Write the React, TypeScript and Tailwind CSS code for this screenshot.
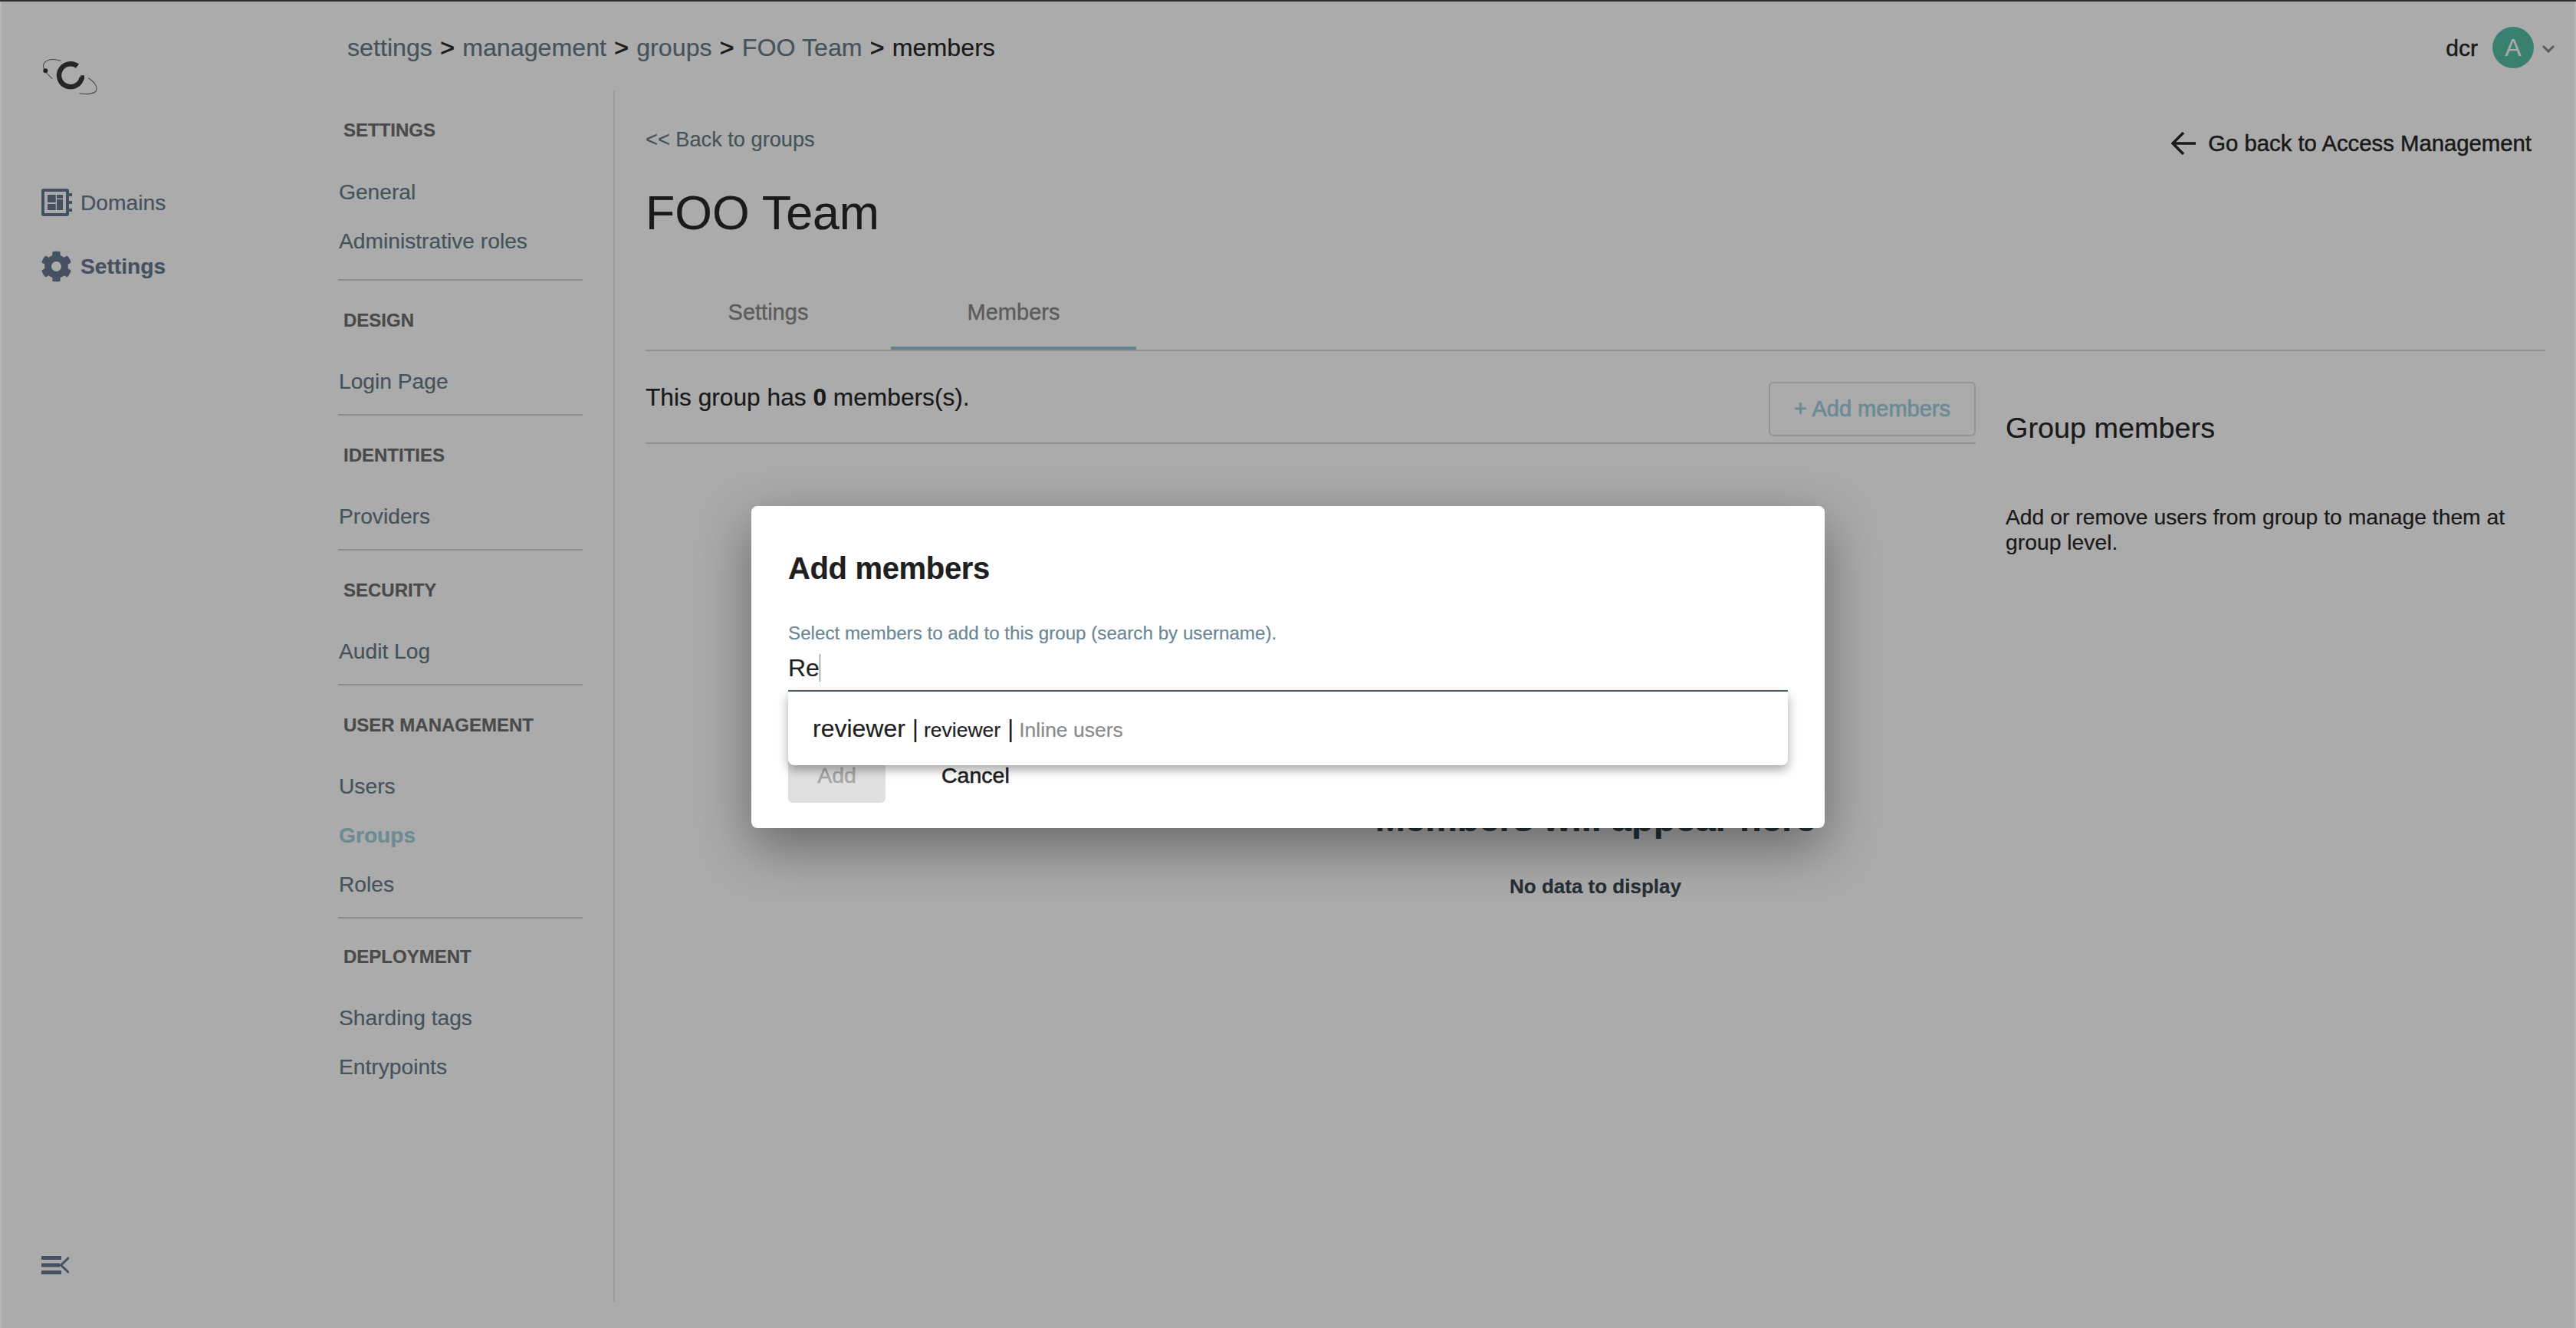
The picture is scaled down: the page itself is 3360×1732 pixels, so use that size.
import React from 'react';
import { FaCog } from 'react-icons/fa';

const NAV_SECTIONS = [
  { title: 'SETTINGS', items: ['General', 'Administrative roles'] },
  { title: 'DESIGN', items: ['Login Page'] },
  { title: 'IDENTITIES', items: ['Providers'] },
  { title: 'SECURITY', items: ['Audit Log'] },
  { title: 'USER MANAGEMENT', items: ['Users', 'Groups', 'Roles'] },
  { title: 'DEPLOYMENT', items: ['Sharding tags', 'Entrypoints'] },
];

const Logo = () => (
  <svg viewBox="50 70 80 60" className="w-[80px] h-[60px]" fill="none">
    <path d="M101 86.2A15 15 0 1 0 106.8 101" stroke="#3a3a3a" strokeWidth="6.5" />
    <path d="M105 100.8H110" stroke="#3a3a3a" strokeWidth="5" />
    <path d="M79.3 79.3C66 75 55 79 56.7 88C57.5 93 63 98 68.3 102.7" stroke="#6f6f6f" strokeWidth="1.1" />
    <path d="M115 101.7C124 107 128 114 125 119C121 123 111 123 103.3 121.7" stroke="#6f6f6f" strokeWidth="1.1" />
    <circle cx="59.3" cy="92.3" r="3" fill="#333" />
  </svg>
);

const DomainsIcon = () => (
  <svg viewBox="54 248 40 36" className="w-[40px] h-[36px]" fill="#68798f">
    <path
      fillRule="evenodd"
      d="M57 248H87A3 3 0 0 1 90 251V281A3 3 0 0 1 87 284H57A3 3 0 0 1 54 281V251A3 3 0 0 1 57 248ZM58 252V280H86V252Z"
    />
    <rect x="62" y="256" width="10.7" height="10" />
    <rect x="74" y="256" width="8" height="4.7" />
    <rect x="62" y="268" width="10.7" height="8" />
    <rect x="74" y="262" width="8" height="14" />
    <rect x="90" y="254" width="4" height="4" />
    <rect x="90" y="264" width="4" height="4" />
    <rect x="90" y="274" width="4" height="4" />
  </svg>
);

const CollapseIcon = () => (
  <svg viewBox="54 1640 36 24" className="w-[36px] h-[24px]" fill="none" stroke="#68798f">
    <path d="M54 1642.5H80M54 1652H78M54 1661.5H80" strokeWidth="5" />
    <path d="M90 1642L79.5 1652L90 1662" strokeWidth="3" />
  </svg>
);

const BackArrow = () => (
  <svg viewBox="0 0 32 32" className="w-[32px] h-[32px]" fill="none" stroke="#272727" strokeWidth="3.5">
    <path d="M32 16H3M16 2L2 16L16 30" />
  </svg>
);

const Chevron = () => (
  <svg viewBox="0 0 16 10" className="w-[16px] h-[10px]" fill="none" stroke="#898989" strokeWidth="3">
    <path d="M1 1L8 8L15 1" />
  </svg>
);

const Crumb = ({ label }: { label: string }) => <span className="text-[#687d88]">{label}</span>;

const Sep = () => <span className="mx-[1.25px] text-[#272727] [-webkit-text-stroke:0.6px]"> &gt; </span>;

export default function App() {
  return (
    <div className="relative flex h-screen overflow-hidden bg-white border-t-2 border-[#2f2f2f] font-['Liberation_Sans',Arial,sans-serif] text-[#272727] [-webkit-text-stroke:0.2px]">
      {/* main rail */}
      <aside className="flex w-[400px] shrink-0 flex-col pl-[54px] pb-[70px]">
        <div className="ml-[-4px] mt-[68px]">
          <Logo />
        </div>
        <div className="mt-[114px] flex h-[40px] items-center gap-[11px] text-[28.2px] text-[#68798f]">
          <DomainsIcon />
          Domains
        </div>
        <div className="mt-[42px] flex h-[42px] items-center gap-[11px] text-[28.2px] font-bold text-[#68798f]">
          <FaCog size={41} className="-ml-px" />
          Settings
        </div>
        <div className="mt-auto">
          <CollapseIcon />
        </div>
      </aside>

      <div className="flex min-w-0 flex-1 flex-col pb-[34px]">
        <header className="flex h-[116px] shrink-0 items-start justify-between pl-[53px] pr-[28px] pt-[41px]">
          <div className="text-[32.2px] leading-[38px]">
            <Crumb label="settings" />
            <Sep />
            <Crumb label="management" />
            <Sep />
            <Crumb label="groups" />
            <Sep />
            <Crumb label="FOO Team" />
            <Sep />
            <span>members</span>
          </div>
          <div className="-mt-[8px] flex items-center">
            <span className="text-[30px] [-webkit-text-stroke:0.5px]">dcr</span>
            <div className="ml-[19px] flex h-[54px] w-[54px] items-center justify-center rounded-full bg-[#55bfa6] text-[32px] text-white [-webkit-text-stroke:0px]">
              A
            </div>
            <div className="ml-[11px] mt-[4px]">
              <Chevron />
            </div>
          </div>
        </header>

        <div className="flex min-h-0 flex-1">
          <nav className="w-[402px] shrink-0 border-r-2 border-[#e6e6e6] pl-[41px] pr-[40px]">
            {NAV_SECTIONS.map((section, i) => (
              <div
                key={section.title}
                className={i === NAV_SECTIONS.length - 1 ? 'pt-[30px]' : i === 0 ? 'border-b-2 border-[#d1d1d1] pb-[18px] pt-[32px]' : 'border-b-2 border-[#d1d1d1] pb-[11px] pt-[32px]'}
              >
                <div className={`h-[40px] pl-[7px] text-[24px] font-bold leading-[40px] text-[#6f6f6f] ${i === 0 ? 'mb-[28px]' : 'mb-[27px]'}`}>
                  {section.title}
                </div>
                {section.items.map((item) => (
                  <div
                    key={item}
                    className={`h-[64px] pl-px text-[28.2px] leading-[64px] ${item === 'Groups' ? 'font-bold text-[#a3d0da]' : 'text-[#687d88]'}`}
                  >
                    {item}
                  </div>
                ))}
              </div>
            ))}
          </nav>

          <main className="min-w-0 flex-1 pl-[40px] pr-[40px]">
            <div className="flex items-start justify-between pt-[44px]">
              <span className="text-[27.2px] leading-[40px] text-[#687d88]">&lt;&lt; Back to groups</span>
              <span className="mr-[18px] mt-[5px] flex items-center gap-[16px] text-[29.3px] leading-[40px] [-webkit-text-stroke:0.5px]">
                <BackArrow />
                Go back to Access Management
              </span>
            </div>
            <h1 className="mt-[34px] text-[62.6px] leading-[72px]">FOO Team</h1>
            <div className="mt-[47px] flex border-b-2 border-[#d8d8d8]">
              <div className="flex h-[96px] w-[320px] items-center justify-center text-[29px] text-[#898989] [-webkit-text-stroke:0.4px]">
                Settings
              </div>
              <div className="flex h-[96px] w-[320px] items-center justify-center border-b-4 border-[#95c3d8] pt-[4px] text-[29px] text-[#898989] [-webkit-text-stroke:0.4px]">
                Members
              </div>
            </div>

            <div className="grid grid-cols-[1735px_1fr] gap-x-[39px]">
              <div className="flex items-start justify-between self-start border-b-2 border-[#d8d8d8] pb-[8px] pt-[40px]">
                <span className="-mt-[2px] text-[31.7px] leading-[44px]">
                  This group has <b>0</b> members(s).
                </span>
                <button className="h-[71px] w-[270px] rounded-[6px] border-2 border-[#dddddd] text-[29px] text-[#9ecfe0] [-webkit-text-stroke:0.7px]">
                  + Add members
                </button>
              </div>
              <div>
                <h2 className="mt-[78px] text-[37.8px] leading-[44px]">Group members</h2>
                <p className="mt-[78px] text-[28.3px] leading-[33px]">
                  Add or remove users from group to manage them at group level.
                </p>
              </div>
              <div className="col-span-2 mt-[314px] text-center">
                <div className="text-[47px] font-bold leading-[60px] text-[#3a4650]">Members will appear here</div>
                <div className="mt-[38px] text-[26px] font-bold leading-[40px] text-[#3a4650]">No data to display</div>
              </div>
            </div>
          </main>
        </div>
      </div>

      {/* add members dialog */}
      <div className="absolute inset-0 flex items-start justify-center border-x-2 border-white/15 bg-black/33 pt-[658px]">
        <div className="h-[420px] w-[1400px] rounded-[8px] bg-white px-[48px] pt-[56px] text-[#1f1f1f] shadow-[0_24px_70px_rgba(0,0,0,0.4)]">
          <div className="text-[40px] font-bold leading-[50px] tracking-[-0.35px]">Add members</div>
          <div className="mt-[44px] text-[24.2px] leading-[32px] text-[#6b8796]">
            Select members to add to this group (search by username).
          </div>
          <div className="relative border-b-2 border-[#4a5d68] pb-[7px] pt-[7px]">
            <div className="flex h-[44px] items-center text-[32px]">
              Re
              <span className="h-[36px] w-[1.5px] bg-[#5f7582]" />
            </div>
            <div className="absolute left-0 right-0 top-full z-10 mt-[2px] flex h-[96px] items-center rounded-b-[8px] bg-white pl-[32px] text-[32px] shadow-[0_6px_14px_rgba(0,0,0,0.35)]">
              <span className="whitespace-pre">
                reviewer <span className="[-webkit-text-stroke:0px]">|</span> <span className="-ml-[2px] text-[26.5px]">reviewer</span> <span className="[-webkit-text-stroke:0px]">|</span> <span className="-ml-[2px] text-[26.5px] text-[#8a8a8a]">Inline users</span>
              </span>
            </div>
          </div>
          <div className="mt-[73px] flex items-center">
            <button className="h-[72px] w-[127px] rounded-[6px] bg-[#e0e0e0] text-[28.5px] text-[#a6a6a6] [-webkit-text-stroke:0.5px]">
              Add
            </button>
            <button className="ml-[73px] text-[28.5px] [-webkit-text-stroke:0.6px]">Cancel</button>
          </div>
        </div>
      </div>
    </div>
  );
}
